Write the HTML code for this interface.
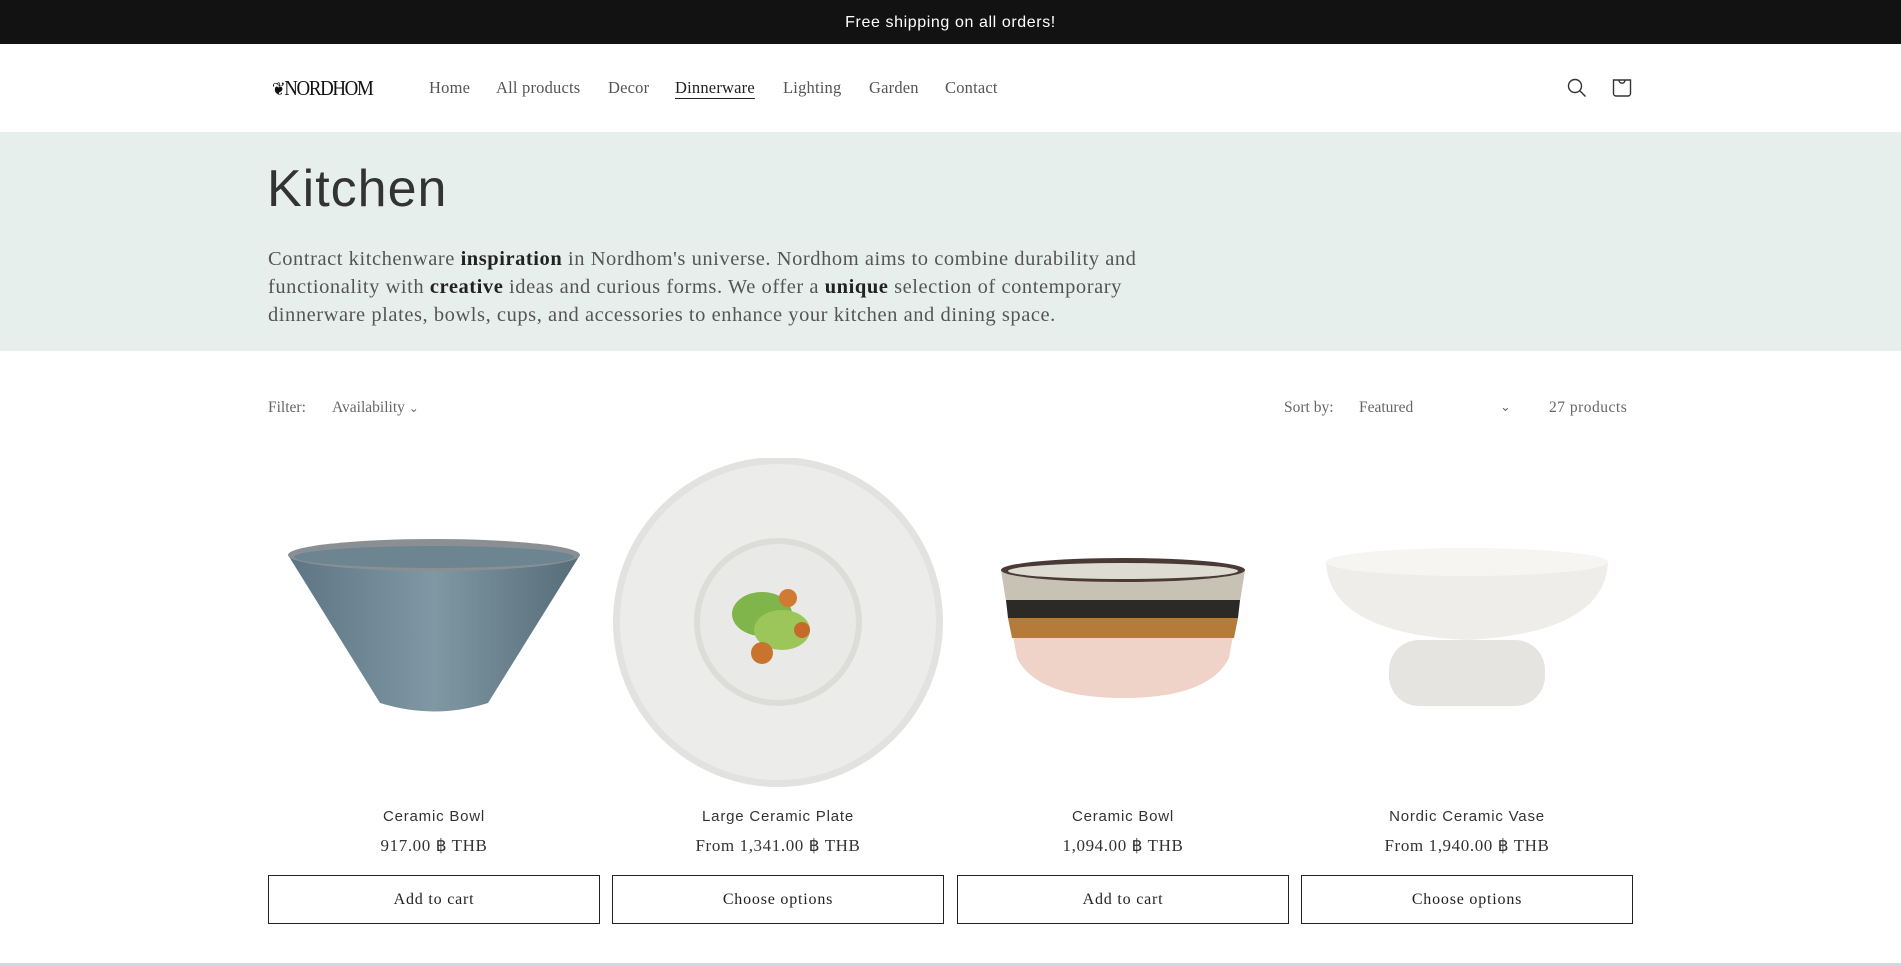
<!DOCTYPE html>
<html><head><meta charset="utf-8">
<style>
*{margin:0;padding:0;box-sizing:border-box}
body{width:1901px;height:966px;overflow:hidden;background:#fff;font-family:"Liberation Serif",serif;color:#121212;position:relative}
.top{position:absolute;left:0;top:0;width:1901px;height:44px;background:#121212;color:#fff;font-family:"Liberation Sans",sans-serif;font-size:16px;letter-spacing:.6px;text-align:center;line-height:46px}
.hdr{position:absolute;top:44px;left:0;width:1901px;height:88px}
.logo{position:absolute;left:272px;top:32px;font-family:"Liberation Serif",serif;font-size:21px;letter-spacing:-1.5px;color:#111;transform:scaleX(.9);transform-origin:left}
.nav{position:absolute;top:34px;font-size:16.5px;color:#555;letter-spacing:.2px}
.banner{position:absolute;top:132px;left:0;width:1901px;height:219px;background:#e7efed}
h1{position:absolute;left:267px;top:159px;font-family:"Liberation Sans",sans-serif;font-weight:normal;font-size:52px;color:#333;letter-spacing:1px}
.desc{position:absolute;left:268px;top:245px;width:910px;font-size:20.5px;letter-spacing:.55px;line-height:28px;color:#555}
.desc b{color:#222}
.flt{position:absolute;top:399px;font-size:15.5px;color:#666}
.card{position:absolute;top:458px;width:332px}
.img{width:332px;height:330px}
.t{position:absolute;top:350px;width:100%;text-align:center;font-family:"Liberation Sans",sans-serif;font-size:15px;letter-spacing:.8px;color:#333}
.p{position:absolute;top:378px;width:100%;text-align:center;font-size:17px;letter-spacing:.6px;color:#333}
.b{position:absolute;top:417px;width:332px;height:49px;border:1px solid #222;text-align:center;line-height:47px;font-size:16px;letter-spacing:.8px;color:#222}
</style></head><body>
<div class="top">Free shipping on all orders!</div>
<div class="hdr">
<div class="logo"><span style="font-size:18px">❦</span>NORDHOM</div>
<div class="nav" style="left:429px">Home</div>
<div class="nav" style="left:496px">All products</div>
<div class="nav" style="left:608px">Decor</div>
<div class="nav" style="left:675px;color:#222;text-decoration:underline;text-underline-offset:5px">Dinnerware</div>
<div class="nav" style="left:783px">Lighting</div>
<div class="nav" style="left:869px">Garden</div>
<div class="nav" style="left:945px">Contact</div>
<svg style="position:absolute;left:1565px;top:32px" width="24" height="24" viewBox="0 0 24 24" fill="none" stroke="#333" stroke-width="1.4"><circle cx="10" cy="10" r="6.5"/><path d="M14.8 14.8L20.5 20.5"/></svg>
<svg style="position:absolute;left:1610px;top:32px" width="24" height="24" viewBox="0 0 24 24" fill="none" stroke="#333" stroke-width="1.4"><path d="M3.5 4h17v13.5a2.5 2.5 0 0 1-2.5 2.5H6a2.5 2.5 0 0 1-2.5-2.5z"/><path d="M9 4.2a3 3 0 0 0 6 0"/></svg>
</div>
<div class="banner"></div>
<h1>Kitchen</h1>
<div class="desc">Contract kitchenware <b>inspiration</b> in Nordhom's universe. Nordhom aims to combine durability and functionality with <b>creative</b> ideas and curious forms. We offer a <b>unique</b> selection of contemporary dinnerware plates, bowls, cups, and accessories to enhance your kitchen and dining space.</div>
<div class="flt" style="left:268px">Filter:</div>
<div class="flt" style="left:332px">Availability <span style="font-size:12px">&#8964;</span></div>
<div class="flt" style="left:1284px">Sort by:</div>
<div class="flt" style="left:1359px">Featured</div>
<div class="flt" style="left:1500px;font-size:13px">&#8964;</div>
<div class="flt" style="left:1549px;letter-spacing:.5px">27 products</div>

<div class="card" style="left:268px">
<svg class="img" viewBox="0 0 332 330"><defs><linearGradient id="g1" x1="0" x2="1"><stop offset="0" stop-color="#5d7583"/><stop offset=".5" stop-color="#7f98a4"/><stop offset="1" stop-color="#566c78"/></linearGradient></defs>
<path d="M20 97 L112 245 Q166 262 220 245 L312 97 Z" fill="url(#g1)"/><ellipse cx="166" cy="97" rx="146" ry="16" fill="#8a8f94"/><ellipse cx="166" cy="99" rx="140" ry="11" fill="#6d8491"/></svg>
<div class="t">Ceramic Bowl</div><div class="p">917.00 ฿ THB</div><div class="b">Add to cart</div></div>

<div class="card" style="left:612px">
<svg class="img" viewBox="0 0 332 330"><circle cx="166" cy="164" r="165" fill="#e2e2e0"/><circle cx="166" cy="164" r="158" fill="#ececea"/><circle cx="166" cy="164" r="84" fill="#dcdcd9"/><circle cx="166" cy="164" r="78" fill="#e9e9e7"/><ellipse cx="150" cy="156" rx="30" ry="22" fill="#7fb54a"/><ellipse cx="170" cy="172" rx="28" ry="20" fill="#9cc65a"/><circle cx="150" cy="195" r="11" fill="#c9742e"/><circle cx="176" cy="140" r="9" fill="#d07a32"/><circle cx="190" cy="172" r="8" fill="#c66a2a"/></svg>
<div class="t">Large Ceramic Plate</div><div class="p">From 1,341.00 ฿ THB</div><div class="b">Choose options</div></div>

<div class="card" style="left:957px">
<svg class="img" viewBox="0 0 332 330"><path d="M44 112 L60 200 Q80 240 166 240 Q252 240 272 200 L288 112 Z" fill="#f0d3c8"/><path d="M44 112 L50 150 L282 150 L288 112 Z" fill="#c8c2b4"/><path d="M49 142 L283 142 L281 160 L51 160Z" fill="#2c2a26"/><path d="M51 160 L281 160 L277 180 L55 180Z" fill="#b67a3a"/><ellipse cx="166" cy="112" rx="122" ry="12" fill="#4a3a36"/><ellipse cx="166" cy="113" rx="115" ry="8" fill="#dedbd2"/></svg>
<div class="t">Ceramic Bowl</div><div class="p">1,094.00 ฿ THB</div><div class="b">Add to cart</div></div>

<div class="card" style="left:1301px">
<svg class="img" viewBox="0 0 332 330"><rect x="88" y="182" width="156" height="66" rx="30" fill="#e6e4e0"/><path d="M25 104 Q28 175 166 182 Q304 175 307 104 Z" fill="#efede9"/><ellipse cx="166" cy="104" rx="141" ry="14" fill="#f6f5f2"/></svg>
<div class="t">Nordic Ceramic Vase</div><div class="p">From 1,940.00 ฿ THB</div><div class="b">Choose options</div></div>
<div style="position:absolute;left:0;top:963px;width:1901px;height:3px;background:#d0d8e0"></div>
</body></html>
